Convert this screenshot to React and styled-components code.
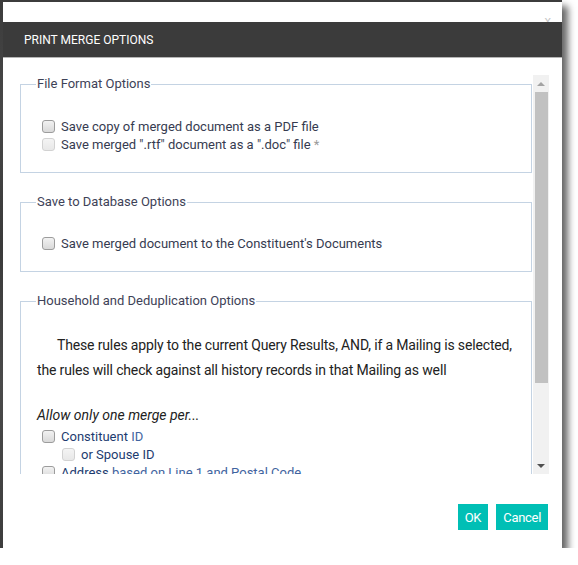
import React from "react";
import styled, { createGlobalStyle } from "styled-components";

const Global = createGlobalStyle`
  html, body { margin: 0; padding: 0; background: #fff; }
  body { font-family: Roboto, "Noto Sans", Arial, sans-serif; }
  * { box-sizing: border-box; }
`;

const Backdrop = styled.div`
  width: 562px;
  height: 548px;
  padding: 2px 0 0 3px;
  background: linear-gradient(180deg, #3c3c3c 0%, #474747 20%, #3a3a3a 45%, #4a4a4a 70%, #3d3d3d 100%);
  box-shadow: 6px 6px 7px rgba(0, 0, 0, 0.6);
  display: flex;
`;

const Dialog = styled.div`
  flex: 1;
  background: #fff;
  display: flex;
  flex-direction: column;
  position: relative;
`;

const TopStrip = styled.div`
  height: 20px;
  position: relative;
  overflow: hidden;
`;

const Close = styled.span`
  position: absolute;
  right: 11px;
  top: 12px;
  font-size: 13px;
  line-height: 13px;
  color: #c8c8c8;
  font-family: Arial, sans-serif;
`;

const Header = styled.div`
  height: 36px;
  background: #3b3b3b;
  border-bottom: 1px solid #b5b5b5;
  display: flex;
  align-items: center;
  padding-left: 21px;
`;

const Title = styled.h1`
  margin: 0;
  font-size: 12px;
  font-weight: 400;
  color: #fff;
  text-transform: uppercase;
`;

/* scrollable body: a clipped pane plus a classic scrollbar column */
const Viewport = styled.div`
  display: flex;
  margin: 17px 13px 0 17px;
  height: 399px;
`;

const Pane = styled.div`
  flex: 1;
  min-width: 0;
  overflow: hidden;
  padding-right: 1px;
`;

const ScrollBar = styled.div`
  width: 16px;
  flex: none;
  background: #f1f1f1;
  display: flex;
  flex-direction: column;
`;

const ArrowButton = styled.div`
  height: 17px;
  flex: none;
  display: flex;
  align-items: center;
  justify-content: center;
`;

const Thumb = styled.div`
  height: 291px;
  margin: 0 1px 0 2px;
  background: #c1c1c1;
`;

const Track = styled.div`
  flex: 1;
`;

const Group = styled.fieldset`
  margin: 0 0 20px 0;
  padding: 0 10px ${(p) => p.$pb}px 16px;
  border: 1px solid #c4d3e3;
  min-width: 0;
`;

const Legend = styled.legend`
  padding: 0 1px;
  margin-left: -1px;
  font-size: 13px;
  line-height: 18px;
  color: #3e4257;
`;

const Rows = styled.div`
  padding-top: ${(p) => p.$pt}px;
  display: flex;
  flex-direction: column;
`;

const Row = styled.label`
  display: flex;
  align-items: center;
  height: 18px;
  margin-left: ${(p) => (p.$indent ? 25 : 5)}px;
  font-size: 13px;
  color: ${(p) => p.$color || "#363b50"};
  gap: 6px;
  white-space: nowrap;
`;

const Box = styled.input.attrs({ type: "checkbox" })`
  appearance: none;
  -webkit-appearance: none;
  margin: 0;
  width: 13px;
  height: 13px;
  border-radius: 3px;
  border: 1px solid ${(p) => (p.disabled ? "#d2d2d2" : "#9c9c9c")};
  background: ${(p) =>
    p.disabled
      ? "linear-gradient(#f4f4f4, #e8e8e8)"
      : "linear-gradient(#f2f2f2, #d9d9d9)"};
  flex: none;
`;

const Muted = styled.span`
  color: #9a9a9a;
`;

const Light = styled.span`
  color: #3f64a0;
`;

const Note = styled.p`
  margin: 23px 0 0;
  font-size: 14px;
  line-height: 25px;
  letter-spacing: -0.15px;
  color: #222;
  text-indent: 20px;
`;

const Lead = styled.p`
  margin: 21px 0 0;
  font-size: 14px;
  line-height: 22px;
  font-style: italic;
  color: #222;
`;

const Footer = styled.div`
  flex: 1;
  display: flex;
  justify-content: flex-end;
  align-items: flex-start;
  gap: 8px;
  padding: 30px 14px 0 0;
`;

const Button = styled.button`
  height: 26px;
  padding: 0 7px;
  border: none;
  background: #00bfb5;
  color: #fff;
  font-family: inherit;
  font-size: 13px;
  letter-spacing: -0.3px;
  cursor: pointer;
`;

const Triangle = ({ up, color }) => (
  <svg width="8" height="4" viewBox="0 0 8 4">
    <path d={up ? "M0 4 L4 0 L8 4 Z" : "M0 0 L8 0 L4 4 Z"} fill={color} />
  </svg>
);

export default function App() {
  return (
    <>
      <Global />
      <Backdrop>
        <Dialog>
          <TopStrip>
            <Close>x</Close>
          </TopStrip>
          <Header>
            <Title>Print Merge Options</Title>
          </Header>
          <Viewport>
            <Pane>
              <Group $pb={19}>
                <Legend>File Format Options</Legend>
                <Rows $pt={24}>
                  <Row>
                    <Box />
                    Save copy of merged document as a PDF file
                  </Row>
                  <Row>
                    <Box disabled />
                    <span>
                      Save merged ".rtf" document as a ".doc" file <Muted>*</Muted>
                    </span>
                  </Row>
                </Rows>
              </Group>
              <Group $pb={19}>
                <Legend>Save to Database Options</Legend>
                <Rows $pt={23}>
                  <Row>
                    <Box />
                    Save merged document to the Constituent's Documents
                  </Row>
                </Rows>
              </Group>
              <Group $pb={10}>
                <Legend>Household and Deduplication Options</Legend>
                <Note>
                  These rules apply to the current Query Results, AND, if a Mailing is selected,
                  the rules will check against all history records in that Mailing as well
                </Note>
                <Lead>Allow only one merge per...</Lead>
                <Rows $pt={1}>
                  <Row $color="#1d3c70">
                    <Box />
                    <span>
                      Constituent <Light>ID</Light>
                    </span>
                  </Row>
                  <Row $indent $color="#1d3c70">
                    <Box disabled />
                    or Spouse ID
                  </Row>
                  <Row $color="#1d3c70">
                    <Box />
                    <span>
                      Address <Light>based on Line 1 and Postal Code</Light>
                    </span>
                  </Row>
                  <Row $color="#1d3c70">
                    <Box />
                    <span>
                      Household <Light>based on Household ID</Light>
                    </span>
                  </Row>
                </Rows>
              </Group>
            </Pane>
            <ScrollBar>
              <ArrowButton>
                <Triangle up color="#a3a3a3" />
              </ArrowButton>
              <Thumb />
              <Track />
              <ArrowButton>
                <Triangle color="#505050" />
              </ArrowButton>
            </ScrollBar>
          </Viewport>
          <Footer>
            <Button>OK</Button>
            <Button>Cancel</Button>
          </Footer>
        </Dialog>
      </Backdrop>
    </>
  );
}
